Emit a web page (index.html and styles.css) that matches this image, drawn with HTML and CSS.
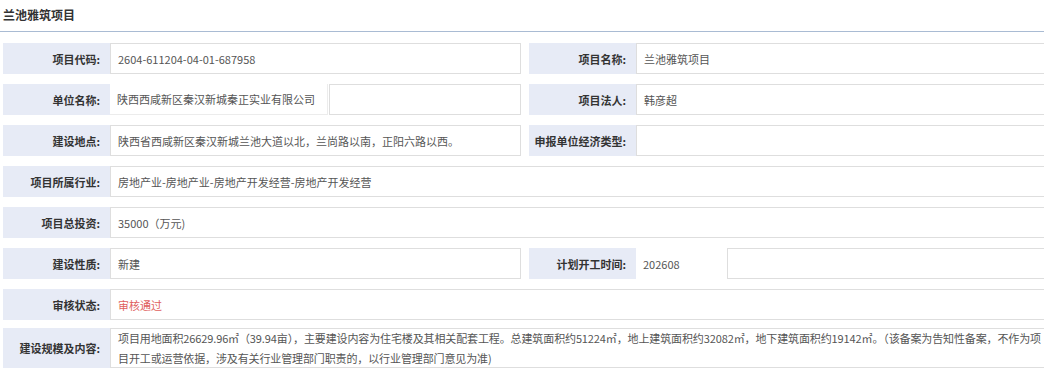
FILE: index.html
```html
<!DOCTYPE html>
<html lang="zh">
<head>
<meta charset="utf-8">
<link rel="stylesheet" href="styles.css">
</head>
<body>
<div class="title">兰池雅筑项目</div>
<div class="rows">
  <div class="row">
    <div class="label">项目代码:</div>
    <div class="value half">2604-611204-04-01-687958</div>
    <div class="label">项目名称:</div>
    <div class="value rest">兰池雅筑项目</div>
  </div>
  <div class="row">
    <div class="label">单位名称:</div>
    <div class="value half split">
      <div class="part-a">陕西西咸新区秦汉新城秦正实业有限公司</div>
      <div class="part-b"></div>
    </div>
    <div class="label">项目法人:</div>
    <div class="value rest">韩彦超</div>
  </div>
  <div class="row">
    <div class="label">建设地点:</div>
    <div class="value half">陕西省西咸新区秦汉新城兰池大道以北，兰尚路以南，正阳六路以西。</div>
    <div class="label">申报单位经济类型:</div>
    <div class="value rest"></div>
  </div>
  <div class="row">
    <div class="label">项目所属行业:</div>
    <div class="value full">房地产业-房地产业-房地产开发经营-房地产开发经营</div>
  </div>
  <div class="row">
    <div class="label">项目总投资:</div>
    <div class="value full">35000（万元)</div>
  </div>
  <div class="row">
    <div class="label">建设性质:</div>
    <div class="value half">新建</div>
    <div class="label">计划开工时间:</div>
    <div class="value rest split">
      <div class="plain">202608</div>
      <div class="boxed"></div>
    </div>
  </div>
  <div class="row">
    <div class="label">审核状态:</div>
    <div class="value full status">审核通过</div>
  </div>
  <div class="row tall">
    <div class="label">建设规模及内容:</div>
    <div class="value full multi">项目用地面积26629.96㎡（39.94亩），主要建设内容为住宅楼及其相关配套工程。总建筑面积约51224㎡，地上建筑面积约32082㎡，地下建筑面积约19142㎡。（该备案为告知性备案，不作为项目开工或运营依据，涉及有关行业管理部门职责的，以行业管理部门意见为准)</div>
  </div>
</div>
</body>
</html>
```

FILE: styles.css
```css
* { box-sizing: border-box; }
html, body { margin: 0; padding: 0; background: #fff; }
body {
  width: 1044px;
  height: 372px;
  overflow: hidden;
  font-family: "Noto Sans CJK SC", "Noto Sans", sans-serif;
  font-size: 11px;
  color: #555;
}
.title {
  height: 32px;
  padding: 6px 0 0 3px;
  font-size: 12px;
  font-weight: bold;
  color: #333;
  border-bottom: 1px solid #a9bbd3;
}
.rows {
  display: flex;
  flex-direction: column;
  gap: 10px;
  padding: 11px 0 0 3px;
}
.row {
  display: flex;
  height: 31px;
}
.row.tall { height: 40px; margin-top: -2px; }
.label {
  flex: 0 0 107px;
  background: #e7ebf6;
  color: #333;
  font-weight: bold;
  text-align: right;
  padding-right: 10px;
  display: flex;
  align-items: center;
  justify-content: flex-end;
  white-space: nowrap;
}
.value {
  border: 1px solid #dedede;
  background: #fff;
  padding-left: 7px;
  display: flex;
  align-items: center;
  white-space: nowrap;
  overflow: hidden;
}
.value.half { flex: 0 0 411px; margin-right: 8px; }
.value.rest { flex: 1 1 auto; margin-right: -2px; }
.value.full { flex: 1 1 auto; margin-right: -2px; }
.value.split {
  border: none;
  padding-left: 0;
  align-items: stretch;
}
.part-a {
  flex: 0 0 218px;
  padding-left: 7px;
  display: flex;
  align-items: center;
  border-bottom: 1px solid #ececec;
  border-right: 1px solid #ececec;
}
.part-b {
  flex: 1 1 auto;
  margin-left: 1px;
  border: 1px solid #dedede;
}
.plain {
  flex: 0 0 84px;
  padding-left: 7px;
  display: flex;
  align-items: center;
}
.boxed {
  flex: 1 1 auto;
  margin-left: 7px;
  border: 1px solid #dedede;
}
.status { color: #e06060; }
.multi {
  white-space: normal;
  line-height: 20px;
  align-items: center;
  padding-right: 0;
  letter-spacing: -0.12px;
  color: #555;
}
```
